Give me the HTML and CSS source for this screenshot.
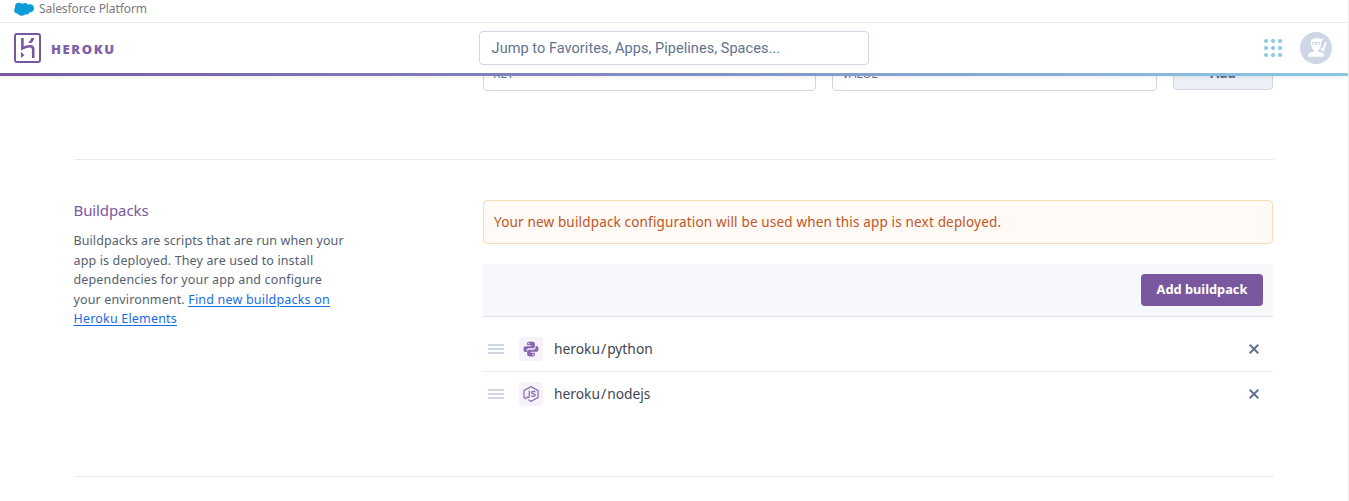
FILE: index.html
```html
<!DOCTYPE html>
<html lang="en">
<head>
<meta charset="utf-8">
<title>Settings | Heroku</title>
<link rel="stylesheet" href="styles.css">
</head>
<body>
<div class="page">
  <header class="header">
    <div class="platform">
      <svg class="cloud" width="20" height="14" viewBox="0 0 20 14"><g fill="#0d9ddb"><circle cx="5" cy="4.800" r="4"/><circle cx="10.800" cy="4.400" r="3.500"/><circle cx="15.800" cy="6.300" r="4.100"/><circle cx="3.600" cy="8.200" r="3.400"/><circle cx="7.500" cy="9.800" r="3.900"/><circle cx="12" cy="9.200" r="3.400"/></g></svg>
      <span class="platform-name">Salesforce Platform</span>
    </div>
    <div class="navbar">
      <a class="brand">
        <svg width="27" height="30" viewBox="0 0 27 30"><rect x="1" y="1" width="25" height="28" rx="2" fill="none" stroke="#79589f" stroke-width="2"/><path d="M8.400 5v10.300c2.600-1.300 5.300-2 7.600-2 2.600 0 3.200 1.200 3.200 3V25" fill="none" stroke="#79589f" stroke-width="2.600"/><path d="M7 19l3.400 3L7 25zM17.300 5h2.900c-.3 2-1.400 3.700-2.800 5h-3.300c1.700-1.500 2.800-3.200 3.200-5z" fill="#79589f"/></svg>
        <span class="wordmark">HEROKU</span>
      </a>
      <div class="search"><span class="search-text">Jump to Favorites, Apps, Pipelines, Spaces...</span></div>
      <div class="tools">
        <svg width="18" height="18" viewBox="0 0 18 18" fill="#8ac8e8"><circle cx="2" cy="2" r="2"/><circle cx="9" cy="2" r="2"/><circle cx="16" cy="2" r="2"/><circle cx="2" cy="9" r="2"/><circle cx="9" cy="9" r="2"/><circle cx="16" cy="9" r="2"/><circle cx="2" cy="16" r="2"/><circle cx="9" cy="16" r="2"/><circle cx="16" cy="16" r="2"/></svg>
        <svg width="32" height="32" viewBox="0 0 32 32"><circle cx="16" cy="16" r="16" fill="#cfd7e6"/><path d="M11 8q4.500-3.500 9.500-1l2-.8.500 1.500-1.200.8.800 1.500-1.400-.3q.3 6-3.200 8.800v1l4 1q2 .5 2 3.500v.8H8v-.8q0-2.500 2-3.200l4-1V18.500q-4-3.500-3-10.500z" fill="#fff"/><path d="M12 10h8v2.500h-8z" fill="#cfd7e6"/><path d="M13 11.200h2.300M16.800 11.200h2.300" stroke="#fff" stroke-width="1.100"/><path d="M26 10.500l-3.300 8.500M21 16.500l3.500 2.200" stroke="#fff" stroke-width="2"/></svg>
      </div>
    </div>
  </header>
  <main class="content">
    <div class="config-row">
      <div class="field key"><span>KEY</span></div>
      <div class="field value"><span>VALUE</span></div>
      <div class="add"><span>Add</span></div>
    </div>
    <section class="buildpacks">
      <div class="intro">
        <h2><span class="title">Buildpacks</span></h2>
        <p><span class="first">Buildpacks are scripts that are run when your</span><br><span>app is deployed. They are used to install</span><br><span>dependencies for your app and configure</span><br><span>your environment. </span><a>Find new buildpacks on</a><br><a>Heroku Elements</a></p>
      </div>
      <div class="panel">
        <div class="notice"><span class="notice-text">Your new buildpack configuration will be used when this app is next deployed.</span></div>
        <div class="toolbar"><div class="button"><span class="button-text">Add buildpack</span></div></div>
        <div class="item">
          <svg class="grip" width="16" height="10" viewBox="0 0 16 10"><path d="M0 1h16M0 5h16M0 9h16" stroke="#cfd7e6" stroke-width="2"/></svg>
          <span class="tile"><svg width="16" height="16" viewBox="0 0 16 16"><g fill="#8968b1"><path d="M7.800.5C5 .5 4 1.200 4 2.800v1.500h4.200v.9H2.400C1 5.200.5 6.500.5 8.200s.7 2.900 1.900 2.900h1.400V9.400c0-1.300 1-2.100 2.200-2.100h4c1.100 0 1.900-.8 1.900-1.900V2.800C11.900 1.300 10.600.5 7.800.5z"/><path d="M8.200 15.500c2.800 0 3.800-.7 3.800-2.300v-1.500H7.800v-.9h5.800c1.400 0 1.900-1.300 1.900-3s-.7-2.900-1.900-2.900h-1v1.700c0 1.300-1 2.100-2.200 2.100H6c-1.100 0-1.900.8-1.900 1.900v2.600c0 1.500 1.300 2.300 4.100 2.300z"/></g><circle cx="5.800" cy="2.500" r=".7" fill="#f5f2fa"/><circle cx="10.200" cy="13.500" r=".7" fill="#f5f2fa"/></svg></span>
          <span class="name">heroku<span class="slash">/</span>python</span>
          <svg class="close" width="10" height="10" viewBox="0 0 10 10"><path d="M.7.7l8.600 8.600M9.300.7L.7 9.300" stroke="#62738d" stroke-width="2"/></svg>
        </div>
        <div class="item">
          <svg class="grip" width="16" height="10" viewBox="0 0 16 10"><path d="M0 1h16M0 5h16M0 9h16" stroke="#cfd7e6" stroke-width="2"/></svg>
          <span class="tile"><svg width="16" height="16" viewBox="0 0 16 16" fill="none" stroke="#8968b1"><path d="M5.500 13.800L8 15.300l7-3.700V4.400L8 .7 1 4.400v7.200l2.500 1.500" stroke-width="1.200"/><path d="M6.300 4.800v5.400q0 1.300-1.300 1.300-1 0-1.200-1M12.200 6q-.5-.6-1.900-.6-1.700 0-1.700 1.200 0 1 1.700 1.200 2 .2 2 1.300T10.300 10.400q-1.600 0-2-1" stroke-width="1.300"/></svg></span>
          <span class="name">heroku<span class="slash">/</span>nodejs</span>
          <svg class="close" width="10" height="10" viewBox="0 0 10 10"><path d="M.7.7l8.600 8.600M9.300.7L.7 9.300" stroke="#62738d" stroke-width="2"/></svg>
        </div>
      </div>
    </section>
  </main>
</div>
</body>
</html>
```
FILE: styles.css
```css
* { box-sizing: border-box; }
body { margin: 0; background: #fff; font-family: "Noto Sans", sans-serif; color: #3f4450; overflow: hidden; }
svg { display: block; flex: none; }
span, a { white-space: pre; }
.page { width: 1349px; height: 501px; overflow: hidden; border-right: 1px solid #eeeff2; }
.header { position: relative; z-index: 2; height: 76px; background: #fff; box-shadow: 0 1px 4px rgba(60, 60, 90, .1); }
.platform { height: 23px; padding: 2px 0 0 14px; display: flex; gap: 5px; border-bottom: 1px solid #ebebf5; font-size: 12px; line-height: 14px; letter-spacing: -.09px; color: #7b7b80; }
.navbar { height: 53px; display: grid; grid-template-columns: 465px 390px 1fr; align-items: center; padding: 0 16px 0 14px; border-bottom: 3px solid; border-image: linear-gradient(90deg, #79589f, #8ac8e8) 1; }
.brand { display: flex; align-items: center; gap: 10px; }
.wordmark { font-family: "Open Sans", sans-serif; font-size: 13px; font-weight: 800; letter-spacing: 1.6px; color: #8060a9; padding-top: 1px; }
.search { height: 34px; border: 1px solid #cfd7e6; border-radius: 4px; padding: 0 11.6px; font-family: Roboto, sans-serif; font-size: 14.5px; line-height: 34px; letter-spacing: .05px; color: #62738d; }
.tools { display: flex; justify-content: flex-end; align-items: center; gap: 18px; }
.content { width: 1200px; margin-left: 74px; }
.config-row { height: 84px; padding-left: 409px; padding-right: 1px; display: flex; gap: 16px; border-bottom: 1px solid #e9eaee; }
.field, .add { height: 34px; margin-top: -19px; border: 1px solid #cfd7e6; border-radius: 4px; font-size: 12px; line-height: 31px; color: #62738d; padding-left: 9px; }
.key { width: 333px; }
.value { width: 325px; }
.add { width: 100px; height: 33px; padding: 0; text-align: center; background: #edf0f6; color: #596981; font-size: 13px; font-weight: 700; }
.buildpacks { height: 317px; display: grid; grid-template-columns: 409px 790px; padding-top: 40px; border-bottom: 1px solid #e9eaee; }
.intro { margin-left: -.5px; }
.intro h2 { margin: 0; font-size: 15px; line-height: 21px; font-weight: 400; letter-spacing: -.1px; color: #79589f; }
.intro p { margin: 10px 0 0; font-size: 12.5px; line-height: 19.5px; letter-spacing: .14px; color: #54616f; }
.intro .first { letter-spacing: .09px; }
.intro a { color: #176de2; letter-spacing: .19px; text-decoration: underline; text-underline-offset: 2px; }
.notice { height: 44px; padding-left: 10px; border: 1px solid #fbdcb8; border-radius: 4px; background: #fffaf6; color: #bf5523; font-size: 13.5px; line-height: 42px; letter-spacing: .17px; }
.toolbar { height: 53px; margin-top: 20px; padding: 10px; display: flex; justify-content: flex-end; background: #f7f8fc; border-radius: 4px 4px 0 0; border-bottom: 1px solid #e1e4ec; }
.button { width: 122px; height: 32px; border-radius: 4px; background: #79589f; color: #fff; font-size: 12.8px; font-weight: 700; line-height: 31px; text-align: center; }
.item { height: 44px; display: flex; align-items: center; padding: 0 14px 0 5px; }
.toolbar + .item { height: 55px; padding-top: 10px; border-bottom: 1px solid #eceef2; }
.tile { width: 24px; height: 24px; margin: 0 11px 0 15px; display: grid; place-items: center; border-radius: 4px; background: #f5f2fa; }
.name { font-size: 13.8px; padding-bottom: 1px; color: #3f4450; }
.slash { margin: 0 1px; }
.close { margin-left: auto; }
```
